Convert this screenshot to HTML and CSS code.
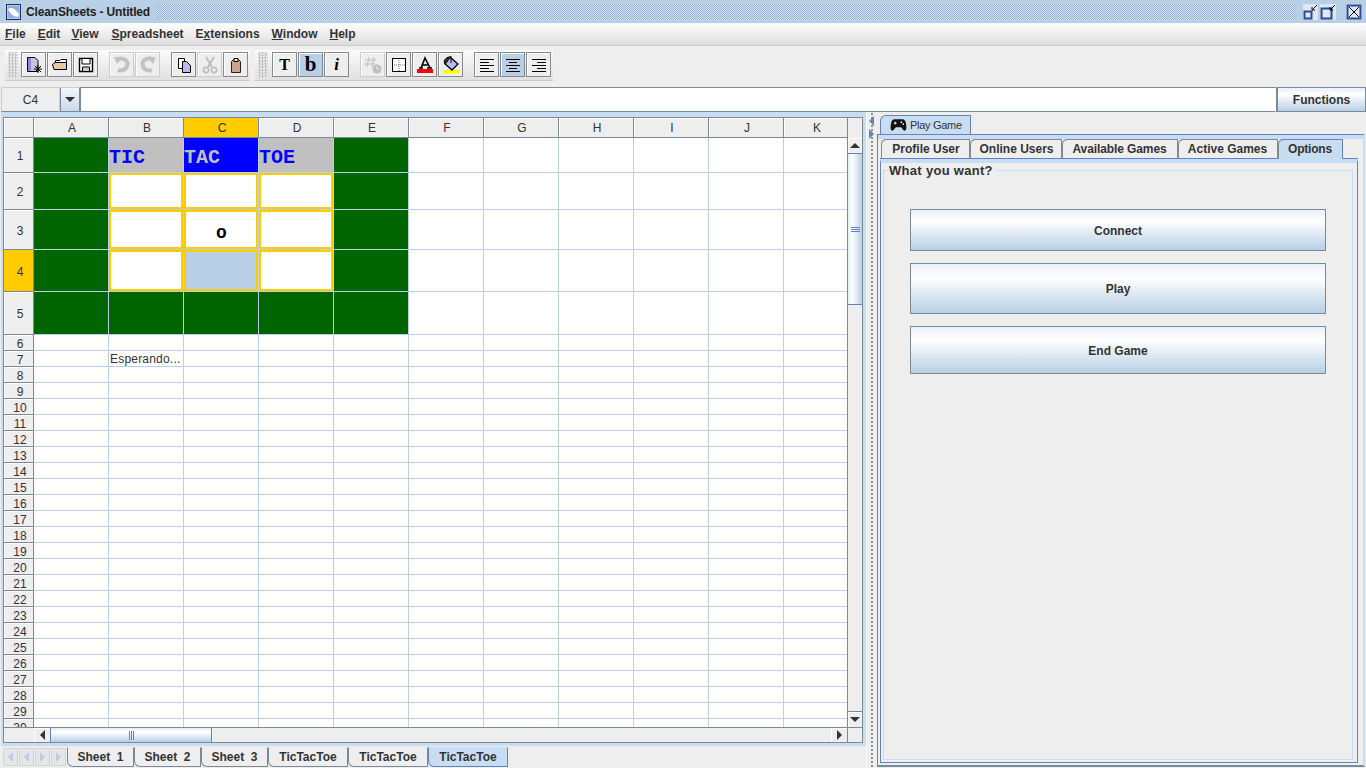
FILE: index.html
```html
<!DOCTYPE html>
<html lang="en">
<head>
    <meta charset="UTF-8">
    <title>CleanSheets - Untitled</title>
    <link rel="stylesheet" href="styles.css">
</head>
<body>
    <!-- Title bar -->
    <div class="titlebar">
        <svg class="app-icon" width="15" height="16" viewBox="0 0 15 16"><rect x="0.5" y="0.5" width="14" height="15" fill="#dbe6f3" stroke="#1c2f6b"/><rect x="1.5" y="1.5" width="12" height="13" fill="#8fb0d8"/><path d="M2 5 C6 2 10 6 13 10 L12 13 C8 13 4 10 2 5Z" fill="#fff"/></svg>
        <span class="title-text">CleanSheets - Untitled</span>
        <div class="title-dots"></div>
        <div class="win-btns">
            <svg width="15" height="16" viewBox="0 0 15 16"><rect x="0" y="0" width="15" height="16" fill="#dde8f4"/><rect x="1.5" y="7.5" width="7" height="7" fill="none" stroke="#2b4a94" stroke-width="2"/><path d="M14 1 L9 6 M9 3 V6 H12" stroke="#000" fill="none"/></svg>
            <svg width="16" height="16" viewBox="0 0 16 16"><rect width="16" height="16" fill="#dde8f4"/><rect x="1.5" y="4.5" width="10" height="10" fill="none" stroke="#2b4a94" stroke-width="2"/><path d="M15 1 L10 6 M10 3 V6 H13" stroke="#000" fill="none"/></svg>
            <svg width="16" height="16" viewBox="0 0 16 16"><rect width="16" height="16" fill="#dde8f4"/><rect x="1.5" y="1.5" width="13" height="13" fill="none" stroke="#2b4a94" stroke-width="2"/><path d="M3 3 L13 13 M13 3 L3 13" stroke="#000" fill="none"/></svg>
        </div>
    </div>

    <!-- Menu -->
    <div class="menubar">
        <span><u>F</u>ile</span>
        <span><u>E</u>dit</span>
        <span class="m-view"><u>V</u>iew</span>
        <span><u>S</u>preadsheet</span>
        <span>E<u>x</u>tensions</span>
        <span><u>W</u>indow</span>
        <span><u>H</u>elp</span>
    </div>

    <!-- Toolbars -->
    <div class="toolbars">
        <div class="toolbar">
            <div class="grip"></div>
            <button class="tool"><svg width="18" height="18" viewBox="0 0 18 18"><path d="M2.5 1.5 H10 L13 4.5 V15.5 H2.5Z" fill="#c3c3ee" stroke="#000"/><path d="M3 2 H6 V15 H3Z" fill="#8d8dd6"/><path d="M13 9 V17 M9 13 H17 M10 10 L16 16 M16 10 L10 16" stroke="#000"/></svg></button>
            <button class="tool"><svg width="18" height="18" viewBox="0 0 18 18"><path d="M4.5 6.5 V4.5 H9 L10 3.5 H15.5 V13.5" fill="#fff" stroke="#000"/><path d="M1.5 8.5 L4 6.5 H15.5 V13.5 H3Z" fill="#e8c9a0" stroke="#000"/></svg></button>
            <button class="tool"><svg width="18" height="18" viewBox="0 0 18 18"><path d="M2.5 2.5 H15.5 V15.5 H2.5Z" fill="#fff" stroke="#000" stroke-width="1.4"/><path d="M5 2.5 H13 V8 H5Z" fill="#fff" stroke="#000"/><path d="M5.5 15 V11 H12.5 V15" fill="#ccc" stroke="#000"/></svg></button>
            <span class="tool-gap"></span>
            <button class="tool off"><svg width="18" height="18" viewBox="0 0 18 18"><path d="M4 3 C11 1 16 5 14 10 C13 14 8 15 5 14" fill="none" stroke="#c2c2c2" stroke-width="4"/><path d="M1 1 L9 2 L4 8Z" fill="#c2c2c2"/></svg></button>
            <button class="tool off"><svg width="18" height="18" viewBox="0 0 18 18"><path d="M14 3 C7 1 2 5 4 10 C5 14 10 15 13 14" fill="none" stroke="#c2c2c2" stroke-width="4"/><path d="M17 1 L9 2 L14 8Z" fill="#c2c2c2"/></svg></button>
            <span class="tool-gap"></span>
            <button class="tool"><svg width="18" height="18" viewBox="0 0 18 18"><path d="M3.5 2.5 H9.5 V12.5 H3.5Z" fill="#fff" stroke="#000"/><path d="M7.5 5.5 H11.5 L15.5 9.5 V16.5 H7.5Z" fill="#b9b9ea" stroke="#000"/></svg></button>
            <button class="tool off"><svg width="18" height="18" viewBox="0 0 18 18"><path d="M5 1 L11 11 M13 1 L7 11" stroke="#bdbdbd" stroke-width="2" fill="none"/><circle cx="5" cy="14" r="2.6" fill="none" stroke="#bdbdbd" stroke-width="1.6"/><circle cx="13" cy="14" r="2.6" fill="none" stroke="#bdbdbd" stroke-width="1.6"/></svg></button>
            <button class="tool"><svg width="18" height="18" viewBox="0 0 18 18"><path d="M4.5 5.5 L6.5 3.5 H11.5 L13.5 5.5 V16.5 H4.5Z" fill="#c9a48e" stroke="#3a1a10"/><path d="M7 2.5 H11 V5.5 H7Z" fill="#eee" stroke="#000"/></svg></button>
        </div>
        <div class="toolbar second">
            <div class="grip"></div>
            <button class="tool letter">T</button>
            <button class="tool letter big on">b</button>
            <button class="tool letter ital">i</button>
            <span class="tool-gap"></span>
            <button class="tool off"><svg width="20" height="20" viewBox="0 0 20 20"><path d="M6 2 L4 12 M11 2 L9 12 M2 5 H13 M1 9 H12" stroke="#bdbdbd" fill="none"/><circle cx="14" cy="14" r="4.5" fill="#bdbdbd"/><path d="M14 11 V14 H16.5" stroke="#eee" fill="none"/></svg></button>
            <button class="tool"><svg width="18" height="18" viewBox="0 0 18 18"><rect x="2.5" y="2.5" width="13" height="13" fill="#fff" stroke="#000"/><path d="M9 4 V15 M4 9 H15" stroke="#777" stroke-dasharray="1 1"/></svg></button>
            <button class="tool"><svg width="18" height="18" viewBox="0 0 18 18"><path d="M3 12 H7 M11 12 H16 M5 12 L9 2 L14 12 M6.5 9 H11.5" stroke="#000" stroke-width="1.6" fill="none"/><rect x="1" y="13" width="16" height="4" fill="#f00"/></svg></button>
            <button class="tool"><svg width="20" height="20" viewBox="0 0 20 20"><rect x="2" y="15" width="16" height="3.5" fill="#ff0"/><path d="M9 2 L17 9 L11 15 L4 9Z" fill="#b9b9ea" stroke="#000" stroke-width="1.3"/><path d="M4 9 C2 7 4 2 9 2" fill="#333" stroke="#000"/><path d="M10 1 V8" stroke="#000"/></svg></button>
            <span class="tool-gap"></span>
            <button class="tool"><svg width="18" height="18" viewBox="0 0 18 18"><path d="M2 3.5 H16 M2 6.5 H11 M2 9.5 H16 M2 12.5 H11 M2 15.5 H16" stroke="#000"/></svg></button>
            <button class="tool on"><svg width="18" height="18" viewBox="0 0 18 18"><path d="M2 3.5 H16 M5 6.5 H13 M2 9.5 H16 M5 12.5 H13 M2 15.5 H16" stroke="#000"/></svg></button>
            <button class="tool"><svg width="18" height="18" viewBox="0 0 18 18"><path d="M2 3.5 H16 M7 6.5 H16 M2 9.5 H16 M7 12.5 H16 M2 15.5 H16" stroke="#000"/></svg></button>
        </div>
    </div>

    <!-- Cell name and formula -->
    <div class="formula">
        <div class="cell-name">C4</div>
        <button class="cell-drop"><i class="tri-down"></i></button>
        <div class="formula-input"></div>
        <button class="metal functions">Functions</button>
    </div>

    <div class="main">
        <div class="left">
            <div class="sheet-frame">
                <div class="sheet-pane">
                    <div class="sheet-area">
                        <div class="sheet">
                            <div class="corner"></div>
                            <div class="ch">A</div><div class="ch">B</div><div class="ch sel">C</div><div class="ch">D</div><div class="ch">E</div><div class="ch">F</div><div class="ch">G</div><div class="ch">H</div><div class="ch">I</div><div class="ch">J</div><div class="ch">K</div>

                            <div class="rh">1</div><div class="c green"></div><div class="c grey big-text">TIC</div><div class="c blue big-text">TAC</div><div class="c grey big-text">TOE</div><div class="c green"></div><div class="fill six"></div>
                            <div class="rh">2</div><div class="c green"></div><div class="c box"></div><div class="c box"></div><div class="c box"></div><div class="c green"></div><div class="fill six"></div>
                            <div class="rh">3</div><div class="c green"></div><div class="c box"></div><div class="c box"><span class="mark">o</span></div><div class="c box"></div><div class="c green"></div><div class="fill six"></div>
                            <div class="rh sel">4</div><div class="c green"></div><div class="c box"></div><div class="c box current"></div><div class="c box"></div><div class="c green"></div><div class="fill six"></div>
                            <div class="rh">5</div><div class="c green"></div><div class="c green"></div><div class="c green"></div><div class="c green"></div><div class="c green"></div><div class="fill six"></div>
                            <div class="rh">6</div><div class="fill"></div>
                            <div class="rh">7</div><div class="c"></div><div class="c note">Esperando...</div><div class="fill nine"></div>
                            <div class="rh">8</div><div class="fill"></div>
                            <div class="rh">9</div><div class="fill"></div>
                            <div class="rh">10</div><div class="fill"></div>
                            <div class="rh">11</div><div class="fill"></div>
                            <div class="rh">12</div><div class="fill"></div>
                            <div class="rh">13</div><div class="fill"></div>
                            <div class="rh">14</div><div class="fill"></div>
                            <div class="rh">15</div><div class="fill"></div>
                            <div class="rh">16</div><div class="fill"></div>
                            <div class="rh">17</div><div class="fill"></div>
                            <div class="rh">18</div><div class="fill"></div>
                            <div class="rh">19</div><div class="fill"></div>
                            <div class="rh">20</div><div class="fill"></div>
                            <div class="rh">21</div><div class="fill"></div>
                            <div class="rh">22</div><div class="fill"></div>
                            <div class="rh">23</div><div class="fill"></div>
                            <div class="rh">24</div><div class="fill"></div>
                            <div class="rh">25</div><div class="fill"></div>
                            <div class="rh">26</div><div class="fill"></div>
                            <div class="rh">27</div><div class="fill"></div>
                            <div class="rh">28</div><div class="fill"></div>
                            <div class="rh">29</div><div class="fill"></div>
                            <div class="rh">30</div><div class="fill"></div>
                        </div>
                        <div class="vscroll">
                            <div class="v-head"></div>
                            <div class="arrow"><i class="tri-up"></i></div>
                            <div class="v-thumb"><span class="v-grip"></span></div>
                            <div class="v-track"></div>
                            <div class="arrow bottom"><i class="tri-down"></i></div>
                        </div>
                    </div>
                    <div class="hscroll">
                        <div class="h-blank"></div>
                        <div class="h-arrow"><i class="tri-left"></i></div>
                        <div class="h-thumb"><span class="h-grip"></span></div>
                        <div class="h-track"></div>
                        <div class="h-arrow"><i class="tri-right"></i></div>
                        <div class="h-corner"></div>
                    </div>
                </div>
            </div>
            <div class="sheet-tabs">
                <div class="nav-btn"><i class="tri-left pale"></i></div>
                <div class="nav-btn"><i class="tri-left pale"></i></div>
                <div class="nav-btn"><i class="tri-right pale"></i></div>
                <div class="nav-btn"><i class="tri-right pale"></i></div>
                <div class="sheet-tab w67">Sheet&nbsp; 1</div>
                <div class="sheet-tab w67">Sheet&nbsp; 2</div>
                <div class="sheet-tab w67">Sheet&nbsp; 3</div>
                <div class="sheet-tab w80">TicTacToe</div>
                <div class="sheet-tab w80">TicTacToe</div>
                <div class="sheet-tab w80 active">TicTacToe</div>
            </div>
        </div>

        <div class="splitter">
            <i class="tri-left small"></i>
            <i class="tri-right small"></i>
        </div>

        <div class="right">
            <div class="outer-tabs">
                <div class="play-tab">
                    <svg width="17" height="14" viewBox="0 0 18 14"><path d="M5 1 H13 C15.5 1 16.5 3 17 6 C17.6 10 17.6 13 15.5 13 C13.5 13 13 10 11.5 9.5 H6.5 C5 10 4.5 13 2.5 13 C0.4 13 0.4 10 1 6 C1.5 3 2.5 1 5 1Z" fill="#111"/><path d="M4 5 H7 M5.5 3.5 V6.5" stroke="#fff"/><circle cx="12" cy="4" r="0.9" fill="#fff"/><circle cx="14" cy="6" r="0.9" fill="#fff"/></svg>
                    <span>Play Game</span>
                </div>
            </div>
            <div class="outer-pane">
                <div class="inner-tabs">
                    <div class="inner-tab t-profile">Profile User</div>
                    <div class="inner-tab t-online">Online Users</div>
                    <div class="inner-tab t-available">Available Games</div>
                    <div class="inner-tab t-active">Active Games</div>
                    <div class="inner-tab t-options active">Options</div>
                </div>
                <div class="inner-pane">
                    <div class="group">
                        <span class="group-title">What you want?</span>
                        <button class="metal action connect">Connect</button>
                        <button class="metal action play">Play</button>
                        <button class="metal action end">End Game</button>
                    </div>
                </div>
            </div>
        </div>
    </div>
</body>
</html>
```

FILE: styles.css
```css
* {
    box-sizing: border-box;
}

html, body {
    margin: 0;
    height: 768px;
    overflow: hidden;
}

body {
    background-color: #eeeeee;
    color: #333333;
    font-family: "Liberation Sans", Arial, sans-serif;
    font-size: 12px;
    font-weight: bold;
    width: 1366px;
}

button {
    font-family: inherit;
    font-size: 12px;
    font-weight: bold;
    color: #333333;
    padding: 0;
    margin: 0;
}

/* Title bar */
.titlebar {
    height: 23px;
    background-color: #b8cfe5;
    display: flex;
    align-items: center;
    padding-left: 6px;
}

.title-text {
    margin-left: 5px;
    color: #222222;
    letter-spacing: -0.15px;
}

.title-dots {
    flex: 1;
    height: 16px;
    margin: 0 7px 0 5px;
    background: repeating-conic-gradient(#94b3e3 0 25%, #d3e2f3 0 50%) 0 0 / 2px 2px;
}

.win-btns {
    display: flex;
    gap: 2px;
    padding-right: 4px;
}

.win-btns svg:last-child {
    margin-left: 8px;
}

/* Menu */
.menubar {
    height: 23px;
    display: flex;
    align-items: center;
    gap: 12px;
    padding: 0 0 1px 5px;
    background: linear-gradient(#ffffff, #dedede);
    border-bottom: 1px solid #cccccc;
}

.m-view {
    margin-left: -1px;
    margin-right: 1px;
}

/* Toolbars */
.toolbars {
    height: 41px;
    display: flex;
    gap: 5px;
    padding: 4px 0 0 5px;
}

.toolbar {
    height: 31px;
    display: flex;
    gap: 1px;
    padding-top: 2px;
    padding-right: 2px;
    border-bottom: 1px solid #cccccc;
    background: linear-gradient(#fbfbfb, #e0e0e0);
}

.grip {
    width: 10px;
    height: 26px;
    margin: 0 2px 0 3px;
    background: repeating-conic-gradient(#c4c4c4 0 25%, #eeeeee 0 50%) 0 0 / 3px 3px;
}

.second .grip {
    margin-right: 3px;
}

.tool {
    width: 25px;
    height: 25px;
    background-color: #eeeeee;
    border: 1px solid #8a8a8a;
    box-shadow: inset 1px 1px 0 #ffffff;
    display: flex;
    align-items: center;
    justify-content: center;
    font-family: "Liberation Serif", serif;
    color: #000000;
}

.tool.off {
    border-color: #cccccc;
}

.tool.on {
    background-color: #b8cfe5;
    border-color: #7a8a99;
}

.tool.letter {
    font-size: 16px;
}

.tool.big {
    font-size: 21px;
    padding-bottom: 1px;
}

.tool.ital {
    font-style: italic;
    font-size: 17px;
}

.tool-gap {
    width: 9px;
}

/* Formula bar */
.formula {
    height: 25px;
    display: flex;
    padding-left: 1px;
}

.cell-name {
    width: 59px;
    height: 25px;
    border: 1px solid #cccccc;
    border-bottom-color: #7a8a99;
    line-height: 24px;
    text-align: center;
    font-weight: normal;
}

.cell-drop {
    width: 20px;
    height: 25px;
    border: 1px solid #7a8a99;
    border-top-color: #cccccc;
    background: linear-gradient(#f2f6fb, #c8d9ea);
    display: flex;
    align-items: center;
    justify-content: center;
}

.formula-input {
    width: 1196px;
    height: 25px;
    background-color: #ffffff;
    border: 1px solid #7a8a99;
    border-right-color: #ffffff;
    box-shadow: 1px 0 0 #7a8a99;
}

.metal {
    background: linear-gradient(#e9f0f8, #ffffff 28%, #b8cfe5);
    border: 1px solid #7a8a99;
}

.functions {
    width: 89px;
    height: 25px;
    margin-left: 1px;
}

/* Triangles */
.tri-down, .tri-up, .tri-left, .tri-right {
    display: block;
    width: 0;
    height: 0;
}

.tri-down {
    border-left: 5px solid transparent;
    border-right: 5px solid transparent;
    border-top: 5px solid #333333;
}

.tri-up {
    border-left: 5px solid transparent;
    border-right: 5px solid transparent;
    border-bottom: 5px solid #333333;
}

.tri-left {
    border-top: 5px solid transparent;
    border-bottom: 5px solid transparent;
    border-right: 5px solid #333333;
}

.tri-right {
    border-top: 5px solid transparent;
    border-bottom: 5px solid transparent;
    border-left: 5px solid #333333;
}

.tri-left.pale {
    border-right-color: #b8cfe5;
}

.tri-right.pale {
    border-left-color: #b8cfe5;
}

.tri-left.small {
    border-right-color: #6382bf;
    margin-bottom: 3px;
}

.tri-right.small {
    border-left-color: #6382bf;
}

/* Main area */
.main {
    height: 656px;
    display: flex;
}

.left {
    width: 866px;
    padding-left: 1px;
}

.sheet-frame {
    height: 634px;
    background-color: #c8ddf2;
    padding: 5px 3px 3px 2px;
}

.sheet-pane {
    height: 626px;
    border: 1px solid #7a8a99;
    background-color: #eeeeee;
    display: flex;
    flex-direction: column;
}

.sheet-area {
    height: 609px;
    display: flex;
}

.sheet {
    width: 845px;
    height: 609px;
    overflow: hidden;
    display: grid;
    grid-template-columns: 30px repeat(10, 75px) 65px;
    grid-template-rows: 20px 35px 37px 40px 42px 43px;
    grid-auto-rows: 16px;
    background-color: #ffffff;
    font-weight: normal;
}

.corner, .ch, .rh {
    background-color: #eeeeee;
    border-right: 1px solid #7a8a99;
    border-bottom: 1px solid #7a8a99;
    box-shadow: inset 1px 1px 0 #ffffff;
    display: flex;
    align-items: center;
    justify-content: center;
}

.ch {
    padding-left: 2px;
}

.rh {
    padding-top: 2px;
    padding-left: 3px;
}

.ch.sel, .rh.sel {
    background-color: #ffcc00;
    box-shadow: none;
}

.c {
    border-right: 1px solid #b8cfe5;
    border-bottom: 1px solid #b8cfe5;
    padding-left: 1px;
    line-height: 15px;
    white-space: nowrap;
    overflow: hidden;
}

.c.note {
    line-height: 17px;
    letter-spacing: 0.2px;
}

.c.green {
    background-color: #006400;
}

.c.grey {
    background-color: #c0c0c0;
    color: #0000ff;
}

.c.blue {
    background-color: #0000ff;
    color: #c0c0c0;
}

.c.big-text {
    font-family: "Liberation Mono", monospace;
    font-weight: bold;
    font-size: 20px;
    line-height: 39px;
    padding-left: 0;
}

.c.box {
    box-shadow: inset 0 0 0 2px #ffcc00;
    display: flex;
    align-items: flex-end;
    justify-content: center;
}

.c.current {
    background-color: #b8cfe5;
}

.mark {
    font-family: "Liberation Mono", monospace;
    font-weight: bold;
    font-size: 18px;
    line-height: 22px;
    color: #000000;
    margin-bottom: 5px;
}

.fill {
    grid-column: 2 / -1;
    border-bottom: 1px solid #b8cfe5;
    background: repeating-linear-gradient(90deg, transparent 0 74px, #b8cfe5 74px 75px);
}

.fill.six {
    grid-column: span 6;
}

.fill.nine {
    grid-column: span 9;
}

/* Scrollbars */
.vscroll {
    width: 15px;
    display: flex;
    flex-direction: column;
    border-left: 1px solid #7a8a99;
}

.v-head {
    height: 20px;
    background-color: #eeeeee;
}

.arrow {
    height: 15px;
    display: flex;
    align-items: center;
    justify-content: center;
    background-color: #eeeeee;
    box-shadow: inset 1px 1px 0 #ffffff;
}

.arrow.bottom {
    height: 16px;
    border-top: 1px solid #7a8a99;
}

.v-thumb {
    height: 152px;
    background: linear-gradient(90deg, #e3edf7, #ffffff 30%, #b8cfe5);
    border-top: 1px solid #6382bf;
    border-bottom: 1px solid #6382bf;
    display: flex;
    align-items: center;
    justify-content: center;
}

.v-grip {
    width: 9px;
    height: 5px;
    border-top: 1px solid #6382bf;
    border-bottom: 1px solid #6382bf;
    background: linear-gradient(#6382bf, #6382bf) 0 1px / 100% 1px no-repeat;
}

.v-track {
    flex: 1;
    background-color: #eeeeee;
}

.hscroll {
    height: 16px;
    display: flex;
    border-top: 1px solid #7a8a99;
    background-color: #eeeeee;
}

.h-blank {
    width: 30px;
}

.h-arrow {
    width: 16px;
    display: flex;
    align-items: center;
    justify-content: center;
    box-shadow: inset 1px 1px 0 #ffffff;
}

.h-thumb {
    width: 162px;
    background: linear-gradient(#e3edf7, #ffffff 30%, #b8cfe5);
    border-left: 1px solid #6382bf;
    border-right: 1px solid #6382bf;
    display: flex;
    align-items: center;
    justify-content: center;
}

.h-grip {
    width: 5px;
    height: 9px;
    border-left: 1px solid #6382bf;
    border-right: 1px solid #6382bf;
    background: linear-gradient(#6382bf, #6382bf) 1px 0 / 1px 100% no-repeat;
}

.h-track {
    width: 619px;
}

.h-corner {
    flex: 1;
    border-left: 1px solid #7a8a99;
}

/* Sheet tabs */
.sheet-tabs {
    height: 22px;
    display: flex;
    padding-left: 2px;
    padding-top: 1px;
}

.nav-btn {
    width: 15px;
    height: 18px;
    margin-right: 1px;
    margin-top: 1px;
    background-color: #e6e6e6;
    border: 1px solid #d4d4d4;
    display: flex;
    align-items: center;
    justify-content: center;
}

.sheet-tab {
    height: 20px;
    border: 1px solid #7a8a99;
    border-top-color: #eeeeee;
    border-bottom-left-radius: 6px;
    line-height: 18px;
    text-align: center;
    color: #333333;
}

.sheet-tab.w67 {
    width: 67px;
}

.sheet-tab.w80 {
    width: 80px;
}

.sheet-tab.active {
    background-color: #c8ddf2;
    border-color: #c8ddf2 #6382bf #6382bf #6382bf;
}

/* Divider between the sheet and the side panel */
.splitter {
    width: 11px;
    padding-top: 4px;
    padding-left: 3px;
    background: radial-gradient(#888888 0.7px, transparent 0.8px) 4px 0 / 4px 4px repeat-y, #eeeeee;
    box-shadow: inset 1px 0 0 #ffffff;
    display: flex;
    flex-direction: column;
}

/* Right panel */
.right {
    width: 489px;
    font-size: 12px;
}

.outer-tabs {
    height: 22px;
    padding: 3px 0 0 3px;
}

.play-tab {
    width: 91px;
    height: 20px;
    background-color: #c8ddf2;
    border: 1px solid #6382bf;
    border-bottom: none;
    border-top-left-radius: 6px;
    display: flex;
    align-items: center;
    gap: 3px;
    padding: 0 0 1px 9px;
    font-weight: normal;
    font-size: 11px;
    letter-spacing: -0.3px;
}

.outer-pane {
    height: 633px;
    width: 488px;
    border-top: 1px solid #6382bf;
    border-left: 1px solid #6382bf;
    border-right: 2px solid #c8ddf2;
    border-bottom: 2px solid #7a8a99;
    padding: 4px 0 0 2px;
    box-shadow: inset 0 4px 0 #c8ddf2;
    background-color: #eeeeee;
}

.inner-tabs {
    height: 20px;
    display: flex;
    padding-left: 1px;
}

.inner-tab {
    height: 20px;
    line-height: 19px;
    text-align: center;
    white-space: nowrap;
    border: 1px solid #7a8a99;
    border-left: none;
    border-bottom: none;
    border-top-left-radius: 5px;
    box-shadow: inset 1px 0 0 #7a8a99;
}

.t-profile {
    width: 89px;
    padding-left: 2px;
}

.t-online {
    width: 92px;
    padding-left: 2px;
}

.t-available {
    width: 116px;
    letter-spacing: -0.1px;
}

.t-active {
    width: 100px;
}

.t-options {
    width: 65px;
    letter-spacing: -0.2px;
}

.inner-tab.active {
    background-color: #c8ddf2;
    border-color: #6382bf;
}

.inner-pane {
    width: 478px;
    height: 604px;
    border: 1px solid #6382bf;
    border-top: 4px solid #c8ddf2;
    box-shadow: 0 -1px 0 #6382bf;
    padding: 7px 4px 3px 2px;
}

.group {
    position: relative;
    height: 590px;
    border: 1px solid #c8ddf2;
    padding: 38px 26px 0 26px;
    display: flex;
    flex-direction: column;
}

/* title sits on the group's top border */
.group-title {
    position: absolute;
    top: -8px;
    left: 5px;
    padding: 0 3px 0 0;
    background-color: #eeeeee;
    font-size: 13px;
    line-height: 15px;
    letter-spacing: 0.3px;
}

.action {
    width: 416px;
    padding-top: 1px;
}

.connect {
    height: 42px;
}

.play {
    height: 51px;
    margin-top: 12px;
}

.end {
    height: 48px;
    margin-top: 12px;
}
```
